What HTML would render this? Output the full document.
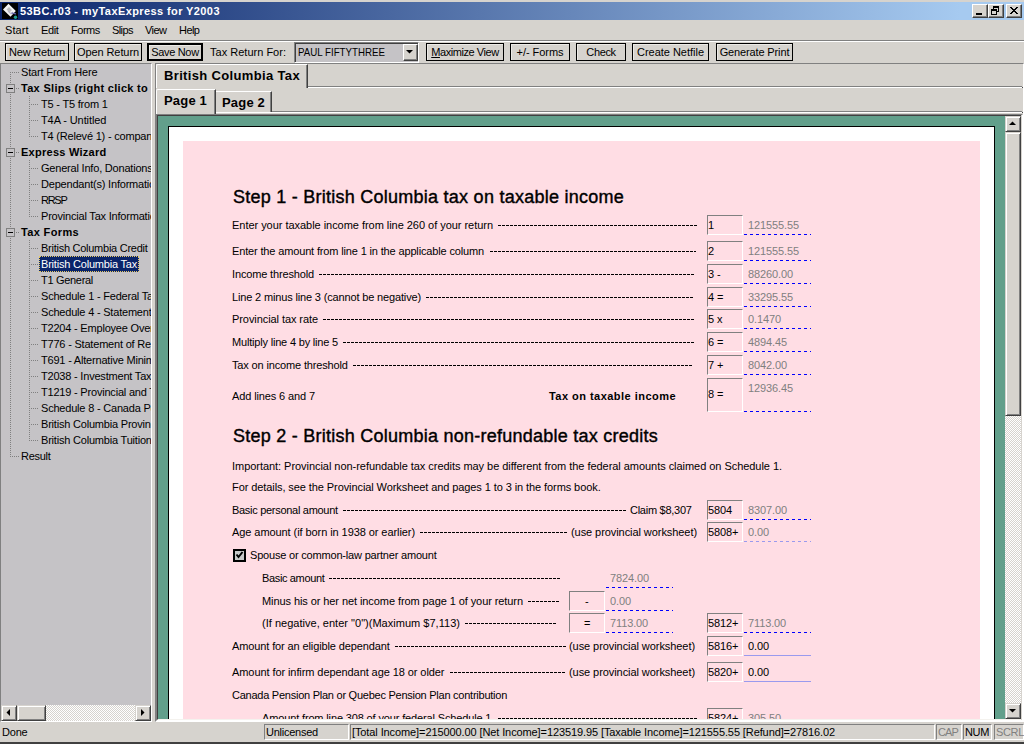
<!DOCTYPE html><html><head><meta charset="utf-8"><style>
html,body{margin:0;padding:0;}
body{width:1024px;height:744px;overflow:hidden;position:relative;background:#d6d3ce;font-family:"Liberation Sans", sans-serif;font-size:11px;color:#000}
body div{position:absolute}
.t{white-space:nowrap}
.clip{overflow:hidden}
</style></head><body>
<div style="left:0px;top:2px;width:1024px;height:18px;background:linear-gradient(to right,#0a246a 0px,#a6caf0 960px)"></div>
<svg style="position:absolute;left:2px;top:3px" width="16" height="16" viewBox="0 0 16 16"><rect width="16" height="16" fill="#000"/><path d="M1 6.5 L6.5 0.8 L13.8 8 L8.5 13.8 Z" fill="#f4f4f4"/><path d="M4.5 6.5 L7 4 L10 7 L7.5 9.5 Z" fill="#c0c0c0"/><path d="M6 8 L9 11 L11 9" stroke="#b8b8c8" stroke-width="1.2" fill="none"/><path d="M9.5 10 L14 10.8" stroke="#6060a8" stroke-width="1.2"/><circle cx="13.5" cy="14.2" r="1.7" fill="#20a090"/></svg>
<div class="t" style="left:20px;top:6px;font-size:11px;line-height:11px;font-weight:bold;color:#fff;letter-spacing:0.4px;">53BC.r03 - myTaxExpress for Y2003</div>
<div style="left:972px;top:4px;width:16px;height:14px;box-sizing:border-box;background:#d6d3ce;border-top:1px solid #fff;border-left:1px solid #fff;border-right:1px solid #404040;border-bottom:1px solid #404040;box-shadow:inset -1px -1px 0 #808080"></div>
<div style="left:988px;top:4px;width:16px;height:14px;box-sizing:border-box;background:#d6d3ce;border-top:1px solid #fff;border-left:1px solid #fff;border-right:1px solid #404040;border-bottom:1px solid #404040;box-shadow:inset -1px -1px 0 #808080"></div>
<div style="left:1006px;top:4px;width:16px;height:14px;box-sizing:border-box;background:#d6d3ce;border-top:1px solid #fff;border-left:1px solid #fff;border-right:1px solid #404040;border-bottom:1px solid #404040;box-shadow:inset -1px -1px 0 #808080"></div>
<div style="left:976px;top:13px;width:6px;height:2px;background:#000"></div>
<div style="left:993px;top:6px;width:6px;height:6px;box-sizing:border-box;border:1px solid #000;border-top-width:2px"></div>
<div style="left:991px;top:9px;width:6px;height:6px;box-sizing:border-box;border:1px solid #000;border-top-width:2px;background:#d6d3ce"></div>
<svg style="position:absolute;left:1006px;top:4px" width="16" height="14" viewBox="0 0 16 14"><path d="M4 3 L11 10 M5 3 L12 10 M11 3 L4 10 M12 3 L5 10" stroke="#000" stroke-width="1" shape-rendering="crispEdges"/></svg>
<div class="t" style="left:5px;top:25px;font-size:11px;line-height:11px;letter-spacing:0.093px;">Start</div>
<div class="t" style="left:41px;top:25px;font-size:11px;line-height:11px;letter-spacing:-0.342px;">Edit</div>
<div class="t" style="left:71px;top:25px;font-size:11px;line-height:11px;letter-spacing:-0.474px;">Forms</div>
<div class="t" style="left:112px;top:25px;font-size:11px;line-height:11px;letter-spacing:-0.589px;">Slips</div>
<div class="t" style="left:145px;top:25px;font-size:11px;line-height:11px;letter-spacing:-0.539px;">View</div>
<div class="t" style="left:179px;top:25px;font-size:11px;line-height:11px;letter-spacing:-0.556px;">Help</div>
<div style="left:0px;top:40px;width:1024px;height:1px;background:#808080"></div>
<div style="left:0px;top:41px;width:1024px;height:1px;background:#fff"></div>
<div style="left:5px;top:43px;width:64px;height:18px;box-sizing:border-box;border:1px solid #000;box-shadow:inset 1px 1px 0 #eceae6"></div>
<div class="t" style="left:5px;top:43px;width:64px;height:18px;line-height:18px;text-align:center;letter-spacing:-0.208px;">New Return</div>
<div style="left:74px;top:43px;width:68px;height:18px;box-sizing:border-box;border:1px solid #000;box-shadow:inset 1px 1px 0 #eceae6"></div>
<div class="t" style="left:74px;top:43px;width:68px;height:18px;line-height:18px;text-align:center;letter-spacing:-0.089px;">Open Return</div>
<div style="left:147px;top:43px;width:56px;height:18px;box-sizing:border-box;border:2px solid #000;box-shadow:inset 1px 1px 0 #eceae6"></div>
<div class="t" style="left:147px;top:43px;width:56px;height:18px;line-height:18px;text-align:center;letter-spacing:-0.33px;">Save Now</div>
<div class="t" style="left:210px;top:47px;font-size:11px;line-height:11px;letter-spacing:0.013px;">Tax Return For:</div>
<div style="left:294px;top:42px;width:125px;height:21px;box-sizing:border-box;background:#c5c3c6;border-top:1px solid #808080;border-left:1px solid #808080;border-right:1px solid #fff;border-bottom:1px solid #fff;box-shadow:inset 1px 1px 0 #404040"></div>
<div class="t" style="left:298px;top:47px;font-size:11px;line-height:11px;transform:scaleX(0.8841);transform-origin:0 0;">PAUL FIFTYTHREE</div>
<div style="left:403px;top:44px;width:15px;height:17px;box-sizing:border-box;background:#d6d3ce;border-top:1px solid #fff;border-left:1px solid #fff;border-right:1px solid #404040;border-bottom:1px solid #404040;box-shadow:inset -1px -1px 0 #808080"></div>
<svg style="position:absolute;left:403px;top:44px" width="15" height="17"><path d="M3 6 H10 L6.5 9.5 Z" fill="#000"/></svg>
<div style="left:426px;top:43px;width:78px;height:18px;box-sizing:border-box;border:1px solid #000;box-shadow:inset 1px 1px 0 #eceae6"></div>
<div class="t" style="left:426px;top:43px;width:78px;height:18px;line-height:18px;text-align:center;letter-spacing:-0.435px;"><u>M</u>aximize View</div>
<div style="left:510px;top:43px;width:60px;height:18px;box-sizing:border-box;border:1px solid #000;box-shadow:inset 1px 1px 0 #eceae6"></div>
<div class="t" style="left:510px;top:43px;width:60px;height:18px;line-height:18px;text-align:center;letter-spacing:-0.042px;">+/- Forms</div>
<div style="left:576px;top:43px;width:50px;height:18px;box-sizing:border-box;border:1px solid #000;box-shadow:inset 1px 1px 0 #eceae6"></div>
<div class="t" style="left:576px;top:43px;width:50px;height:18px;line-height:18px;text-align:center;letter-spacing:-0.377px;">Check</div>
<div style="left:632px;top:43px;width:77px;height:18px;box-sizing:border-box;border:1px solid #000;box-shadow:inset 1px 1px 0 #eceae6"></div>
<div class="t" style="left:632px;top:43px;width:77px;height:18px;line-height:18px;text-align:center;letter-spacing:-0.019px;">Create Netfile</div>
<div style="left:716px;top:43px;width:77px;height:18px;box-sizing:border-box;border:1px solid #000;box-shadow:inset 1px 1px 0 #eceae6"></div>
<div class="t" style="left:716px;top:43px;width:77px;height:18px;line-height:18px;text-align:center;letter-spacing:-0.139px;">Generate Print</div>
<div style="left:0px;top:63px;width:152px;height:659px;box-sizing:border-box;background:#c5c3c6;border-top:1px solid #808080;border-left:1px solid #808080;border-right:1px solid #fff;border-bottom:1px solid #fff"></div>
<div class="clip" style="left:1px;top:64px;width:150px;height:641px">
<div style="left:9px;top:8px;width:1px;height:385px;background:repeating-linear-gradient(to bottom,#808080 0 1px,transparent 1px 2px)"></div>
<div style="left:28px;top:32px;width:1px;height:41px;background:repeating-linear-gradient(to bottom,#808080 0 1px,transparent 1px 2px)"></div>
<div style="left:28px;top:96px;width:1px;height:57px;background:repeating-linear-gradient(to bottom,#808080 0 1px,transparent 1px 2px)"></div>
<div style="left:28px;top:176px;width:1px;height:201px;background:repeating-linear-gradient(to bottom,#808080 0 1px,transparent 1px 2px)"></div>
<div style="left:9px;top:8px;width:9px;height:1px;background:repeating-linear-gradient(to right,#808080 0 1px,transparent 1px 2px)"></div>
<div class="t" style="left:20px;top:3px;font-size:11px;line-height:11px;letter-spacing:-0.157px;">Start From Here</div>
<div style="left:9px;top:24px;width:9px;height:1px;background:repeating-linear-gradient(to right,#808080 0 1px,transparent 1px 2px)"></div>
<div style="left:5px;top:20px;width:9px;height:9px;box-sizing:border-box;border:1px solid #808080;background:#c5c3c6"></div>
<div style="left:7px;top:24px;width:5px;height:1px;background:#000"></div>
<div class="t" style="left:20px;top:19px;font-size:11px;line-height:11px;font-weight:bold;letter-spacing:0.3px;">Tax Slips (right click to add)</div>
<div style="left:28px;top:40px;width:9px;height:1px;background:repeating-linear-gradient(to right,#808080 0 1px,transparent 1px 2px)"></div>
<div class="t" style="left:40px;top:35px;font-size:11px;line-height:11px;letter-spacing:-0.206px;">T5 - T5 from 1</div>
<div style="left:28px;top:56px;width:9px;height:1px;background:repeating-linear-gradient(to right,#808080 0 1px,transparent 1px 2px)"></div>
<div class="t" style="left:40px;top:51px;font-size:11px;line-height:11px;letter-spacing:-0.096px;">T4A - Untitled</div>
<div style="left:28px;top:72px;width:9px;height:1px;background:repeating-linear-gradient(to right,#808080 0 1px,transparent 1px 2px)"></div>
<div class="t" style="left:40px;top:67px;font-size:11px;line-height:11px;letter-spacing:-0.2px;">T4 (Relev&eacute; 1) - company</div>
<div style="left:9px;top:88px;width:9px;height:1px;background:repeating-linear-gradient(to right,#808080 0 1px,transparent 1px 2px)"></div>
<div style="left:5px;top:84px;width:9px;height:9px;box-sizing:border-box;border:1px solid #808080;background:#c5c3c6"></div>
<div style="left:7px;top:88px;width:5px;height:1px;background:#000"></div>
<div class="t" style="left:20px;top:83px;font-size:11px;line-height:11px;font-weight:bold;letter-spacing:0.262px;">Express Wizard</div>
<div style="left:28px;top:104px;width:9px;height:1px;background:repeating-linear-gradient(to right,#808080 0 1px,transparent 1px 2px)"></div>
<div class="t" style="left:40px;top:99px;font-size:11px;line-height:11px;letter-spacing:-0.2px;">General Info, Donations</div>
<div style="left:28px;top:120px;width:9px;height:1px;background:repeating-linear-gradient(to right,#808080 0 1px,transparent 1px 2px)"></div>
<div class="t" style="left:40px;top:115px;font-size:11px;line-height:11px;letter-spacing:-0.2px;">Dependant(s) Information</div>
<div style="left:28px;top:136px;width:9px;height:1px;background:repeating-linear-gradient(to right,#808080 0 1px,transparent 1px 2px)"></div>
<div class="t" style="left:40px;top:131px;font-size:11px;line-height:11px;letter-spacing:-1.266px;">RRSP</div>
<div style="left:28px;top:152px;width:9px;height:1px;background:repeating-linear-gradient(to right,#808080 0 1px,transparent 1px 2px)"></div>
<div class="t" style="left:40px;top:147px;font-size:11px;line-height:11px;letter-spacing:-0.2px;">Provincial Tax Information</div>
<div style="left:9px;top:168px;width:9px;height:1px;background:repeating-linear-gradient(to right,#808080 0 1px,transparent 1px 2px)"></div>
<div style="left:5px;top:164px;width:9px;height:9px;box-sizing:border-box;border:1px solid #808080;background:#c5c3c6"></div>
<div style="left:7px;top:168px;width:5px;height:1px;background:#000"></div>
<div class="t" style="left:20px;top:163px;font-size:11px;line-height:11px;font-weight:bold;letter-spacing:0.354px;">Tax Forms</div>
<div style="left:28px;top:184px;width:9px;height:1px;background:repeating-linear-gradient(to right,#808080 0 1px,transparent 1px 2px)"></div>
<div class="t" style="left:40px;top:179px;font-size:11px;line-height:11px;letter-spacing:-0.26px;">British Columbia Credit</div>
<div style="left:28px;top:200px;width:9px;height:1px;background:repeating-linear-gradient(to right,#808080 0 1px,transparent 1px 2px)"></div>
<div style="left:38px;top:192px;width:100px;height:16px;background:#0a246a;box-sizing:border-box;border:1px dotted #e8c860"></div>
<div class="t" style="left:40px;top:195px;font-size:11px;line-height:11px;color:#fff;letter-spacing:-0.203px;">British Columbia Tax</div>
<div style="left:28px;top:216px;width:9px;height:1px;background:repeating-linear-gradient(to right,#808080 0 1px,transparent 1px 2px)"></div>
<div class="t" style="left:40px;top:211px;font-size:11px;line-height:11px;letter-spacing:-0.303px;">T1 General</div>
<div style="left:28px;top:232px;width:9px;height:1px;background:repeating-linear-gradient(to right,#808080 0 1px,transparent 1px 2px)"></div>
<div class="t" style="left:40px;top:227px;font-size:11px;line-height:11px;letter-spacing:-0.2px;">Schedule 1 - Federal Tax</div>
<div style="left:28px;top:248px;width:9px;height:1px;background:repeating-linear-gradient(to right,#808080 0 1px,transparent 1px 2px)"></div>
<div class="t" style="left:40px;top:243px;font-size:11px;line-height:11px;letter-spacing:-0.2px;">Schedule 4 - Statement of Investment</div>
<div style="left:28px;top:264px;width:9px;height:1px;background:repeating-linear-gradient(to right,#808080 0 1px,transparent 1px 2px)"></div>
<div class="t" style="left:40px;top:259px;font-size:11px;line-height:11px;letter-spacing:-0.2px;">T2204 - Employee Overpayment</div>
<div style="left:28px;top:280px;width:9px;height:1px;background:repeating-linear-gradient(to right,#808080 0 1px,transparent 1px 2px)"></div>
<div class="t" style="left:40px;top:275px;font-size:11px;line-height:11px;letter-spacing:-0.2px;">T776 - Statement of Real Estate</div>
<div style="left:28px;top:296px;width:9px;height:1px;background:repeating-linear-gradient(to right,#808080 0 1px,transparent 1px 2px)"></div>
<div class="t" style="left:40px;top:291px;font-size:11px;line-height:11px;letter-spacing:-0.2px;">T691 - Alternative Minimum Tax</div>
<div style="left:28px;top:312px;width:9px;height:1px;background:repeating-linear-gradient(to right,#808080 0 1px,transparent 1px 2px)"></div>
<div class="t" style="left:40px;top:307px;font-size:11px;line-height:11px;letter-spacing:-0.2px;">T2038 - Investment Tax Credit</div>
<div style="left:28px;top:328px;width:9px;height:1px;background:repeating-linear-gradient(to right,#808080 0 1px,transparent 1px 2px)"></div>
<div class="t" style="left:40px;top:323px;font-size:11px;line-height:11px;letter-spacing:-0.2px;">T1219 - Provincial and Territorial</div>
<div style="left:28px;top:344px;width:9px;height:1px;background:repeating-linear-gradient(to right,#808080 0 1px,transparent 1px 2px)"></div>
<div class="t" style="left:40px;top:339px;font-size:11px;line-height:11px;letter-spacing:-0.2px;">Schedule 8 - Canada Pension Plan</div>
<div style="left:28px;top:360px;width:9px;height:1px;background:repeating-linear-gradient(to right,#808080 0 1px,transparent 1px 2px)"></div>
<div class="t" style="left:40px;top:355px;font-size:11px;line-height:11px;letter-spacing:-0.2px;">British Columbia Provincial</div>
<div style="left:28px;top:376px;width:9px;height:1px;background:repeating-linear-gradient(to right,#808080 0 1px,transparent 1px 2px)"></div>
<div class="t" style="left:40px;top:371px;font-size:11px;line-height:11px;letter-spacing:-0.2px;">British Columbia Tuition</div>
<div style="left:9px;top:392px;width:9px;height:1px;background:repeating-linear-gradient(to right,#808080 0 1px,transparent 1px 2px)"></div>
<div class="t" style="left:20px;top:387px;font-size:11px;line-height:11px;letter-spacing:-0.265px;">Result</div>
</div>
<div style="left:1px;top:705px;width:150px;height:16px;background-color:#d6d3ce;background-image:repeating-conic-gradient(#fff 0 25%,#d6d3ce 0 50%);background-size:2px 2px"></div>
<div style="left:1px;top:705px;width:16px;height:16px;box-sizing:border-box;background:#d6d3ce;border-top:1px solid #d6d3ce;border-left:1px solid #d6d3ce;border-right:1px solid #404040;border-bottom:1px solid #404040;box-shadow:inset 1px 1px 0 #fff,inset -1px -1px 0 #808080"></div>
<svg style="position:absolute;left:1px;top:705px" width="16" height="16"><path d="M9 4 V11 L5.5 7.5 Z" fill="#000"/></svg>
<div style="left:17px;top:705px;width:29px;height:16px;box-sizing:border-box;background:#d6d3ce;border-top:1px solid #d6d3ce;border-left:1px solid #d6d3ce;border-right:1px solid #404040;border-bottom:1px solid #404040;box-shadow:inset 1px 1px 0 #fff,inset -1px -1px 0 #808080"></div>
<div style="left:135px;top:705px;width:16px;height:16px;box-sizing:border-box;background:#d6d3ce;border-top:1px solid #d6d3ce;border-left:1px solid #d6d3ce;border-right:1px solid #404040;border-bottom:1px solid #404040;box-shadow:inset 1px 1px 0 #fff,inset -1px -1px 0 #808080"></div>
<svg style="position:absolute;left:135px;top:705px" width="16" height="16"><path d="M6 4 V11 L9.5 7.5 Z" fill="#000"/></svg>
<div style="left:155px;top:63px;width:869px;height:659px;box-sizing:border-box;border-top:1px solid #808080;border-left:1px solid #808080;border-right:1px solid #fff;border-bottom:1px solid #fff"></div>
<div style="left:308px;top:86px;width:714px;height:1px;background:#808080"></div>
<div style="left:308px;top:87px;width:714px;height:1px;background:#fff"></div>
<div style="left:1022px;top:87px;width:1px;height:1px;background:#404040"></div>
<div style="left:156px;top:64px;width:152px;height:24px;box-sizing:border-box;border-top:1px solid #fff;border-left:1px solid #fff;border-right:1px solid #404040;box-shadow:inset -1px 0 0 #808080;border-top-left-radius:2px"></div>
<div class="t" style="left:164px;top:69px;font-size:13px;line-height:13px;font-weight:bold;letter-spacing:0.347px;">British Columbia Tax</div>
<div style="left:272px;top:111px;width:750px;height:1px;background:#808080"></div>
<div style="left:216px;top:112px;width:806px;height:1px;background:#fff"></div>
<div style="left:1022px;top:112px;width:1px;height:1px;background:#404040"></div>
<div style="left:216px;top:91px;width:56px;height:21px;box-sizing:border-box;border-top:1px solid #fff;border-right:1px solid #404040;box-shadow:inset -1px 0 0 #808080"></div>
<div class="t" style="left:222px;top:96px;font-size:13px;line-height:13px;font-weight:bold;letter-spacing:0.18px;">Page 2</div>
<div style="left:156px;top:89px;width:60px;height:25px;box-sizing:border-box;border-top:1px solid #fff;border-left:1px solid #fff;border-right:1px solid #404040;box-shadow:inset -1px 0 0 #808080;border-top-left-radius:2px;background:#d6d3ce"></div>
<div class="t" style="left:164px;top:94px;font-size:13px;line-height:13px;font-weight:bold;letter-spacing:0.18px;">Page 1</div>
<div style="left:155px;top:114px;width:868px;height:608px;box-sizing:border-box;border-top:1px solid #808080;border-left:2px solid #808080;border-right:1px solid #fff;border-bottom:2px solid #fff"></div>
<div style="left:157px;top:115px;width:864px;height:605px;box-sizing:border-box;border-top:1px solid #404040;border-left:1px solid #404040;border-bottom:1px solid #f4f2ee"></div>
<div class="clip" style="left:158px;top:116px;width:847px;height:603px;background:#629f8b">
<div style="left:10px;top:10px;width:827px;height:1200px;background:#fff;box-sizing:border-box;border:1px solid #000"></div>
<div style="left:25px;top:25px;width:797px;height:1200px;background:#ffdde4"></div>
<div class="t" style="left:75px;top:72px;font-size:18px;line-height:18px;letter-spacing:0.251px;-webkit-text-stroke:0.4px #000;">Step 1 - British Columbia tax on taxable income</div>
<div class="t" style="left:74px;top:104px;font-size:11px;line-height:11px;letter-spacing:-0.036px;">Enter your taxable income from line 260 of your return</div>
<div style="left:340px;top:109px;width:199px;height:1px;background:repeating-linear-gradient(to right,#000 0 3px,transparent 3px 4px)"></div>
<div style="left:549px;top:99px;width:36px;height:20px;box-sizing:border-box;border-top:1px solid #808080;border-left:1px solid #808080;border-right:1px solid #fff;border-bottom:1px solid #fff"></div>
<div class="t" style="left:550px;top:104px;font-size:11px;line-height:11px;letter-spacing:-0.12px;">1</div>
<div class="t" style="left:590px;top:104px;font-size:11px;line-height:11px;color:#808080;letter-spacing:-0.12px;">121555.55</div>
<div style="left:586px;top:118px;width:67px;height:1px;background:repeating-linear-gradient(to right,#0000ff 0 3px,transparent 3px 6px)"></div>
<div class="t" style="left:74px;top:130px;font-size:11px;line-height:11px;letter-spacing:-0.149px;">Enter the amount from line 1 in the applicable column</div>
<div style="left:332px;top:135px;width:206px;height:1px;background:repeating-linear-gradient(to right,#000 0 3px,transparent 3px 4px)"></div>
<div style="left:549px;top:125px;width:36px;height:20px;box-sizing:border-box;border-top:1px solid #808080;border-left:1px solid #808080;border-right:1px solid #fff;border-bottom:1px solid #fff"></div>
<div class="t" style="left:550px;top:130px;font-size:11px;line-height:11px;letter-spacing:-0.12px;">2</div>
<div class="t" style="left:590px;top:130px;font-size:11px;line-height:11px;color:#808080;letter-spacing:-0.12px;">121555.55</div>
<div style="left:586px;top:144px;width:67px;height:1px;background:repeating-linear-gradient(to right,#0000ff 0 3px,transparent 3px 6px)"></div>
<div class="t" style="left:74px;top:153px;font-size:11px;line-height:11px;letter-spacing:-0.149px;">Income threshold</div>
<div style="left:161px;top:158px;width:375px;height:1px;background:repeating-linear-gradient(to right,#000 0 3px,transparent 3px 4px)"></div>
<div style="left:549px;top:148px;width:36px;height:20px;box-sizing:border-box;border-top:1px solid #808080;border-left:1px solid #808080;border-right:1px solid #fff;border-bottom:1px solid #fff"></div>
<div class="t" style="left:550px;top:153px;font-size:11px;line-height:11px;letter-spacing:-0.12px;">3 -</div>
<div class="t" style="left:590px;top:153px;font-size:11px;line-height:11px;color:#808080;letter-spacing:-0.12px;">88260.00</div>
<div style="left:586px;top:167px;width:67px;height:1px;background:repeating-linear-gradient(to right,#0000ff 0 3px,transparent 3px 6px)"></div>
<div class="t" style="left:74px;top:176px;font-size:11px;line-height:11px;letter-spacing:-0.152px;">Line 2 minus line 3 (cannot be negative)</div>
<div style="left:268px;top:181px;width:267px;height:1px;background:repeating-linear-gradient(to right,#000 0 3px,transparent 3px 4px)"></div>
<div style="left:549px;top:171px;width:36px;height:20px;box-sizing:border-box;border-top:1px solid #808080;border-left:1px solid #808080;border-right:1px solid #fff;border-bottom:1px solid #fff"></div>
<div class="t" style="left:550px;top:176px;font-size:11px;line-height:11px;letter-spacing:-0.12px;">4 =</div>
<div class="t" style="left:590px;top:176px;font-size:11px;line-height:11px;color:#808080;letter-spacing:-0.12px;">33295.55</div>
<div style="left:586px;top:190px;width:67px;height:1px;background:repeating-linear-gradient(to right,#0000ff 0 3px,transparent 3px 6px)"></div>
<div class="t" style="left:74px;top:198px;font-size:11px;line-height:11px;letter-spacing:-0.076px;">Provincial tax rate</div>
<div style="left:165px;top:203px;width:371px;height:1px;background:repeating-linear-gradient(to right,#000 0 3px,transparent 3px 4px)"></div>
<div style="left:549px;top:193px;width:36px;height:20px;box-sizing:border-box;border-top:1px solid #808080;border-left:1px solid #808080;border-right:1px solid #fff;border-bottom:1px solid #fff"></div>
<div class="t" style="left:550px;top:198px;font-size:11px;line-height:11px;letter-spacing:-0.12px;">5 x</div>
<div class="t" style="left:590px;top:198px;font-size:11px;line-height:11px;color:#808080;letter-spacing:-0.12px;">0.1470</div>
<div style="left:586px;top:212px;width:67px;height:1px;background:repeating-linear-gradient(to right,#0000ff 0 3px,transparent 3px 6px)"></div>
<div class="t" style="left:74px;top:221px;font-size:11px;line-height:11px;letter-spacing:-0.187px;">Multiply line 4 by line 5</div>
<div style="left:185px;top:226px;width:351px;height:1px;background:repeating-linear-gradient(to right,#000 0 3px,transparent 3px 4px)"></div>
<div style="left:549px;top:216px;width:36px;height:20px;box-sizing:border-box;border-top:1px solid #808080;border-left:1px solid #808080;border-right:1px solid #fff;border-bottom:1px solid #fff"></div>
<div class="t" style="left:550px;top:221px;font-size:11px;line-height:11px;letter-spacing:-0.12px;">6 =</div>
<div class="t" style="left:590px;top:221px;font-size:11px;line-height:11px;color:#808080;letter-spacing:-0.12px;">4894.45</div>
<div style="left:586px;top:235px;width:67px;height:1px;background:repeating-linear-gradient(to right,#0000ff 0 3px,transparent 3px 6px)"></div>
<div class="t" style="left:74px;top:244px;font-size:11px;line-height:11px;letter-spacing:-0.149px;">Tax on income threshold</div>
<div style="left:195px;top:249px;width:339px;height:1px;background:repeating-linear-gradient(to right,#000 0 3px,transparent 3px 4px)"></div>
<div style="left:549px;top:239px;width:36px;height:20px;box-sizing:border-box;border-top:1px solid #808080;border-left:1px solid #808080;border-right:1px solid #fff;border-bottom:1px solid #fff"></div>
<div class="t" style="left:550px;top:244px;font-size:11px;line-height:11px;letter-spacing:-0.12px;">7 +</div>
<div class="t" style="left:590px;top:244px;font-size:11px;line-height:11px;color:#808080;letter-spacing:-0.12px;">8042.00</div>
<div style="left:586px;top:258px;width:67px;height:1px;background:repeating-linear-gradient(to right,#0000ff 0 3px,transparent 3px 6px)"></div>
<div class="t" style="left:74px;top:275px;font-size:11px;line-height:11px;letter-spacing:-0.12px;">Add lines 6 and 7</div>
<div class="t" style="left:391px;top:275px;font-size:11px;line-height:11px;font-weight:bold;letter-spacing:0.468px;">Tax on taxable income</div>
<div style="left:549px;top:262px;width:36px;height:34px;box-sizing:border-box;border-top:1px solid #808080;border-left:1px solid #808080;border-right:1px solid #fff;border-bottom:1px solid #fff"></div>
<div class="t" style="left:550px;top:273px;font-size:11px;line-height:11px;letter-spacing:-0.12px;">8 =</div>
<div class="t" style="left:590px;top:267px;font-size:11px;line-height:11px;color:#808080;letter-spacing:-0.12px;">12936.45</div>
<div style="left:586px;top:295px;width:67px;height:1px;background:repeating-linear-gradient(to right,#0000ff 0 3px,transparent 3px 6px)"></div>
<div class="t" style="left:75px;top:311px;font-size:18px;line-height:18px;letter-spacing:0.246px;-webkit-text-stroke:0.4px #000;">Step 2 - British Columbia non-refundable tax credits</div>
<div class="t" style="left:74px;top:345px;font-size:11px;line-height:11px;letter-spacing:-0.044px;">Important: Provincial non-refundable tax credits may be different from the federal amounts claimed on Schedule 1.</div>
<div class="t" style="left:74px;top:366px;font-size:11px;line-height:11px;letter-spacing:-0.086px;">For details, see the Provincial Worksheet and pages 1 to 3 in the forms book.</div>
<div class="t" style="left:74px;top:389px;font-size:11px;line-height:11px;letter-spacing:-0.291px;">Basic personal amount</div>
<div style="left:185px;top:394px;width:283px;height:1px;background:repeating-linear-gradient(to right,#000 0 3px,transparent 3px 4px)"></div>
<div class="t" style="left:472px;top:389px;font-size:11px;line-height:11px;letter-spacing:-0.261px;">Claim $8,307</div>
<div style="left:549px;top:384px;width:36px;height:20px;box-sizing:border-box;border-top:1px solid #808080;border-left:1px solid #808080;border-right:1px solid #fff;border-bottom:1px solid #fff"></div>
<div class="t" style="left:550px;top:389px;font-size:11px;line-height:11px;letter-spacing:-0.12px;">5804</div>
<div class="t" style="left:590px;top:389px;font-size:11px;line-height:11px;color:#808080;letter-spacing:-0.12px;">8307.00</div>
<div style="left:586px;top:403px;width:67px;height:1px;background:repeating-linear-gradient(to right,#0000ff 0 3px,transparent 3px 6px)"></div>
<div class="t" style="left:74px;top:411px;font-size:11px;line-height:11px;letter-spacing:-0.074px;">Age amount (if born in 1938 or earlier)</div>
<div style="left:262px;top:416px;width:147px;height:1px;background:repeating-linear-gradient(to right,#000 0 3px,transparent 3px 4px)"></div>
<div class="t" style="left:413px;top:411px;font-size:11px;line-height:11px;letter-spacing:-0.069px;">(use provincial worksheet)</div>
<div style="left:549px;top:406px;width:36px;height:20px;box-sizing:border-box;border-top:1px solid #808080;border-left:1px solid #808080;border-right:1px solid #fff;border-bottom:1px solid #fff"></div>
<div class="t" style="left:550px;top:411px;font-size:11px;line-height:11px;letter-spacing:-0.12px;">5808+</div>
<div class="t" style="left:590px;top:411px;font-size:11px;line-height:11px;color:#808080;letter-spacing:-0.12px;">0.00</div>
<div style="left:586px;top:425px;width:67px;height:1px;background:repeating-linear-gradient(to right,#9a9aee 0 3px,transparent 3px 6px)"></div>
<div style="left:75px;top:433px;width:13px;height:13px;box-sizing:border-box;border:2px solid #000;background:#c8c8c8"></div>
<svg style="position:absolute;left:75px;top:433px" width="13" height="13"><path d="M3.5 5.5 L5.5 8 L9.5 3" stroke="#000" stroke-width="2" fill="none"/></svg>
<div class="t" style="left:92px;top:434px;font-size:11px;line-height:11px;letter-spacing:-0.189px;">Spouse or common-law partner amount</div>
<div class="t" style="left:104px;top:457px;font-size:11px;line-height:11px;letter-spacing:-0.355px;">Basic amount</div>
<div style="left:171px;top:462px;width:231px;height:1px;background:repeating-linear-gradient(to right,#000 0 3px,transparent 3px 4px)"></div>
<div class="t" style="left:452px;top:457px;font-size:11px;line-height:11px;color:#808080;letter-spacing:-0.12px;">7824.00</div>
<div style="left:448px;top:471px;width:67px;height:1px;background:repeating-linear-gradient(to right,#0000ff 0 3px,transparent 3px 6px)"></div>
<div class="t" style="left:104px;top:480px;font-size:11px;line-height:11px;letter-spacing:-0.081px;">Minus his or her net income from page 1 of your return</div>
<div style="left:370px;top:485px;width:31px;height:1px;background:repeating-linear-gradient(to right,#000 0 3px,transparent 3px 4px)"></div>
<div style="left:411px;top:475px;width:36px;height:20px;box-sizing:border-box;border-top:1px solid #808080;border-left:1px solid #808080;border-right:1px solid #fff;border-bottom:1px solid #fff"></div>
<div class="t" style="left:427px;top:480px;font-size:11px;line-height:11px;letter-spacing:-0.12px;">-</div>
<div class="t" style="left:452px;top:480px;font-size:11px;line-height:11px;color:#808080;letter-spacing:-0.12px;">0.00</div>
<div style="left:448px;top:494px;width:67px;height:1px;background:repeating-linear-gradient(to right,#0000ff 0 3px,transparent 3px 6px)"></div>
<div class="t" style="left:104px;top:502px;font-size:11px;line-height:11px;letter-spacing:0.021px;">(If negative, enter &quot;0&quot;)(Maximum $7,113)</div>
<div style="left:307px;top:507px;width:92px;height:1px;background:repeating-linear-gradient(to right,#000 0 3px,transparent 3px 4px)"></div>
<div style="left:411px;top:497px;width:36px;height:20px;box-sizing:border-box;border-top:1px solid #808080;border-left:1px solid #808080;border-right:1px solid #fff;border-bottom:1px solid #fff"></div>
<div class="t" style="left:426px;top:502px;font-size:11px;line-height:11px;letter-spacing:-0.12px;">=</div>
<div class="t" style="left:452px;top:502px;font-size:11px;line-height:11px;color:#808080;letter-spacing:-0.12px;">7113.00</div>
<div style="left:448px;top:516px;width:67px;height:1px;background:repeating-linear-gradient(to right,#0000ff 0 3px,transparent 3px 6px)"></div>
<div style="left:549px;top:497px;width:36px;height:20px;box-sizing:border-box;border-top:1px solid #808080;border-left:1px solid #808080;border-right:1px solid #fff;border-bottom:1px solid #fff"></div>
<div class="t" style="left:550px;top:502px;font-size:11px;line-height:11px;letter-spacing:-0.12px;">5812+</div>
<div class="t" style="left:590px;top:502px;font-size:11px;line-height:11px;color:#808080;letter-spacing:-0.12px;">7113.00</div>
<div style="left:586px;top:516px;width:67px;height:1px;background:repeating-linear-gradient(to right,#0000ff 0 3px,transparent 3px 6px)"></div>
<div class="t" style="left:74px;top:525px;font-size:11px;line-height:11px;letter-spacing:-0.117px;">Amount for an eligible dependant</div>
<div style="left:237px;top:530px;width:171px;height:1px;background:repeating-linear-gradient(to right,#000 0 3px,transparent 3px 4px)"></div>
<div class="t" style="left:411px;top:525px;font-size:11px;line-height:11px;letter-spacing:-0.069px;">(use provincial worksheet)</div>
<div style="left:549px;top:520px;width:36px;height:20px;box-sizing:border-box;border-top:1px solid #808080;border-left:1px solid #808080;border-right:1px solid #fff;border-bottom:1px solid #fff"></div>
<div class="t" style="left:550px;top:525px;font-size:11px;line-height:11px;letter-spacing:-0.12px;">5816+</div>
<div class="t" style="left:590px;top:525px;font-size:11px;line-height:11px;letter-spacing:-0.12px;">0.00</div>
<div style="left:586px;top:539px;width:67px;height:1px;background:#9a9aee"></div>
<div class="t" style="left:74px;top:551px;font-size:11px;line-height:11px;letter-spacing:-0.08px;">Amount for infirm dependant age 18 or older</div>
<div style="left:292px;top:556px;width:115px;height:1px;background:repeating-linear-gradient(to right,#000 0 3px,transparent 3px 4px)"></div>
<div class="t" style="left:411px;top:551px;font-size:11px;line-height:11px;letter-spacing:-0.069px;">(use provincial worksheet)</div>
<div style="left:549px;top:546px;width:36px;height:20px;box-sizing:border-box;border-top:1px solid #808080;border-left:1px solid #808080;border-right:1px solid #fff;border-bottom:1px solid #fff"></div>
<div class="t" style="left:550px;top:551px;font-size:11px;line-height:11px;letter-spacing:-0.12px;">5820+</div>
<div class="t" style="left:590px;top:551px;font-size:11px;line-height:11px;letter-spacing:-0.12px;">0.00</div>
<div style="left:586px;top:565px;width:67px;height:1px;background:#9a9aee"></div>
<div class="t" style="left:74px;top:574px;font-size:11px;line-height:11px;letter-spacing:-0.248px;">Canada Pension Plan or Quebec Pension Plan contribution</div>
<div class="t" style="left:104px;top:597px;font-size:11px;line-height:11px;letter-spacing:-0.143px;">Amount from line 308 of your federal Schedule 1</div>
<div style="left:340px;top:602px;width:199px;height:1px;background:repeating-linear-gradient(to right,#000 0 3px,transparent 3px 4px)"></div>
<div style="left:549px;top:592px;width:36px;height:20px;box-sizing:border-box;border-top:1px solid #808080;border-left:1px solid #808080;border-right:1px solid #fff;border-bottom:1px solid #fff"></div>
<div class="t" style="left:550px;top:597px;font-size:11px;line-height:11px;letter-spacing:-0.12px;">5824+</div>
<div class="t" style="left:590px;top:597px;font-size:11px;line-height:11px;color:#808080;letter-spacing:-0.12px;">305.50</div>
</div>
<div style="left:1005px;top:116px;width:16px;height:603px;background-color:#d6d3ce;background-image:repeating-conic-gradient(#fff 0 25%,#d6d3ce 0 50%);background-size:2px 2px"></div>
<div style="left:1005px;top:116px;width:16px;height:16px;box-sizing:border-box;background:#d6d3ce;border-top:1px solid #d6d3ce;border-left:1px solid #d6d3ce;border-right:1px solid #404040;border-bottom:1px solid #404040;box-shadow:inset 1px 1px 0 #fff,inset -1px -1px 0 #808080"></div>
<svg style="position:absolute;left:1005px;top:116px" width="16" height="16"><path d="M4 9 H11 L7.5 5.5 Z" fill="#000"/></svg>
<div style="left:1005px;top:132px;width:16px;height:284px;box-sizing:border-box;background:#d6d3ce;border-top:1px solid #d6d3ce;border-left:1px solid #d6d3ce;border-right:1px solid #404040;border-bottom:1px solid #404040;box-shadow:inset 1px 1px 0 #fff,inset -1px -1px 0 #808080"></div>
<div style="left:1005px;top:703px;width:16px;height:16px;box-sizing:border-box;background:#d6d3ce;border-top:1px solid #d6d3ce;border-left:1px solid #d6d3ce;border-right:1px solid #404040;border-bottom:1px solid #404040;box-shadow:inset 1px 1px 0 #fff,inset -1px -1px 0 #808080"></div>
<svg style="position:absolute;left:1005px;top:703px" width="16" height="16"><path d="M4 6 H11 L7.5 9.5 Z" fill="#000"/></svg>
<div style="left:0px;top:742px;width:1024px;height:2px;background:#404040"></div>
<div class="t" style="left:2px;top:727px;font-size:11px;line-height:11px;letter-spacing:-0.199px;">Done</div>
<div style="left:264px;top:724px;width:85px;height:16px;box-sizing:border-box;border-top:1px solid #808080;border-left:1px solid #808080;border-right:1px solid #fff;border-bottom:1px solid #fff"></div>
<div class="t" style="left:266px;top:727px;font-size:11px;line-height:11px;letter-spacing:-0.242px;">Unlicensed</div>
<div style="left:350px;top:724px;width:585px;height:16px;box-sizing:border-box;border-top:1px solid #808080;border-left:1px solid #808080;border-right:1px solid #fff;border-bottom:1px solid #fff"></div>
<div class="t" style="left:352px;top:727px;font-size:11px;line-height:11px;letter-spacing:-0.101px;">[Total Income]=215000.00 [Net Income]=123519.95 [Taxable Income]=121555.55 [Refund]=27816.02</div>
<div style="left:936px;top:724px;width:26px;height:16px;box-sizing:border-box;border-top:1px solid #808080;border-left:1px solid #808080;border-right:1px solid #fff;border-bottom:1px solid #fff"></div>
<div class="t" style="left:938px;top:727px;font-size:11px;line-height:11px;color:#808080;letter-spacing:-0.875px;">CAP</div>
<div style="left:963px;top:724px;width:29px;height:16px;box-sizing:border-box;border-top:1px solid #808080;border-left:1px solid #808080;border-right:1px solid #fff;border-bottom:1px solid #fff"></div>
<div class="t" style="left:965px;top:727px;font-size:11px;line-height:11px;letter-spacing:-0.354px;">NUM</div>
<div style="left:994px;top:724px;width:30px;height:16px;box-sizing:border-box;border-top:1px solid #808080;border-left:1px solid #808080;border-right:1px solid #fff;border-bottom:1px solid #fff"></div>
<div class="t" style="left:996px;top:727px;font-size:11px;line-height:11px;color:#808080;letter-spacing:-0.336px;">SCRL</div>
</body></html>
